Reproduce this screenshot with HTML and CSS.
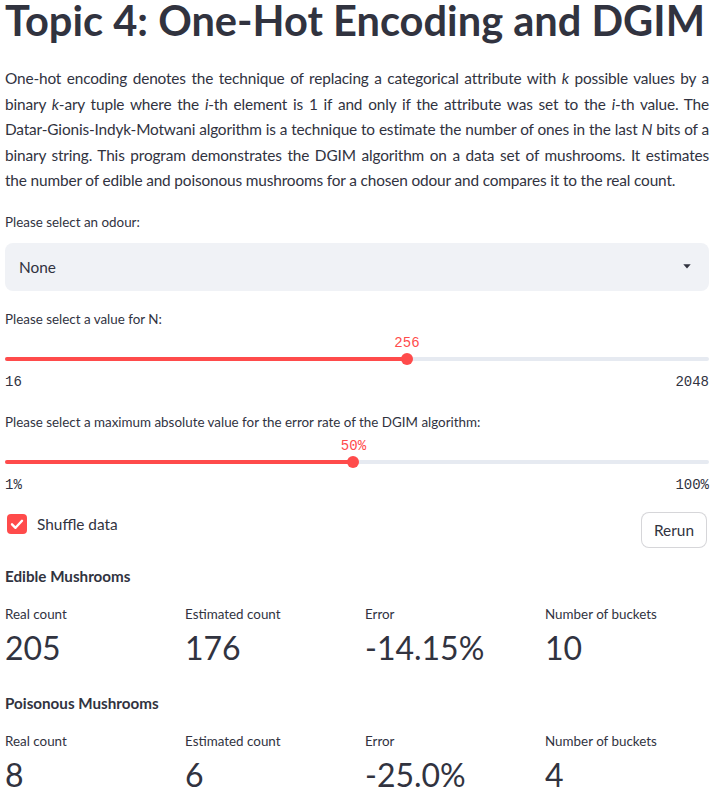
FILE: index.html
```html
<!DOCTYPE html>
<html lang="en">
<head>
<meta charset="utf-8">
<title>Topic 4: One-Hot Encoding and DGIM</title>
<link rel="stylesheet" href="styles.css">
</head>
<body>
<main class="page">
  <h1 class="title">Topic 4: One-Hot Encoding and DGIM</h1>
  <p class="intro"><span class="line">One-hot encoding denotes the technique of replacing a categorical attribute with <em>k</em> possible values by a</span> <span class="line">binary <em>k</em>-ary tuple where the <em>i</em>-th element is 1 if and only if the attribute was set to the <em>i</em>-th value. The</span> <span class="line">Datar-Gionis-Indyk-Motwani algorithm is a technique to estimate the number of ones in the last <em>N</em> bits of a</span> <span class="line">binary string. This program demonstrates the DGIM algorithm on a data set of mushrooms. It estimates</span> <span class="line last">the number of edible and poisonous mushrooms for a chosen odour and compares it to the real count.</span></p>

  <div class="field">
    <div class="label">Please select an odour:</div>
    <div class="select">
      <span class="select-value">None</span>
      <svg class="caret" width="8" height="5" viewBox="0 0 8 5"><path d="M0.3 0.3 H7.7 L4 4.6 Z" fill="#31333F"/></svg>
    </div>
  </div>

  <div class="field">
    <div class="label">Please select a value for N:</div>
    <div class="slider">
      <div class="track"><div class="fill" style="width:57.1%"></div></div>
      <div class="thumb" style="left:57.1%"><span class="thumb-value">256</span></div>
    </div>
    <div class="ticks"><span>16</span><span>2048</span></div>
  </div>

  <div class="field">
    <div class="label">Please select a maximum absolute value for the error rate of the DGIM algorithm:</div>
    <div class="slider">
      <div class="track"><div class="fill" style="width:49.5%"></div></div>
      <div class="thumb" style="left:49.5%"><span class="thumb-value">50%</span></div>
    </div>
    <div class="ticks"><span>1%</span><span>100%</span></div>
  </div>

  <div class="controls">
    <label class="checkbox">
      <span class="box"><svg width="20" height="20" viewBox="0 0 20 20"><polyline points="5,10.3 8.5,13.8 15,6.8" fill="none" stroke="#fff" stroke-width="2.4" stroke-linecap="round" stroke-linejoin="round"/></svg></span>
      <span class="checkbox-text">Shuffle data</span>
    </label>
    <button class="button" type="button">Rerun</button>
  </div>

  <section class="group">
    <div class="group-title">Edible Mushrooms</div>
    <div class="metrics">
      <div class="metric"><div class="metric-label">Real count</div><div class="metric-value">205</div></div>
      <div class="metric"><div class="metric-label">Estimated count</div><div class="metric-value">176</div></div>
      <div class="metric"><div class="metric-label">Error</div><div class="metric-value">-14.15%</div></div>
      <div class="metric"><div class="metric-label">Number of buckets</div><div class="metric-value">10</div></div>
    </div>
  </section>

  <section class="group">
    <div class="group-title">Poisonous Mushrooms</div>
    <div class="metrics">
      <div class="metric"><div class="metric-label">Real count</div><div class="metric-value">8</div></div>
      <div class="metric"><div class="metric-label">Estimated count</div><div class="metric-value">6</div></div>
      <div class="metric"><div class="metric-label">Error</div><div class="metric-value">-25.0%</div></div>
      <div class="metric"><div class="metric-label">Number of buckets</div><div class="metric-value">4</div></div>
    </div>
  </section>
</main>
</body>
</html>
```

FILE: styles.css
```css
* { box-sizing: border-box; }

html, body {
  margin: 0;
  padding: 0;
  background: #ffffff;
}

body {
  font-family: Lato, "Noto Sans", sans-serif;
  color: #31333F;
  overflow: hidden;
}

.page {
  padding: 0 5px;
}

.title {
  margin: 0;
  font-size: 41.6px;
  line-height: 40px;
  font-weight: 700;
  white-space: nowrap;
}

.intro {
  margin: 26px 0 0;
  font-size: 15.4px;
  line-height: 25.6px;
  letter-spacing: -0.15px;
  text-align: justify;
}

.intro .line {
  display: block;
  text-align: justify;
  text-align-last: justify;
}

.intro .line.last {
  text-align-last: left;
}

.intro em {
  font-style: italic;
}

.field {
  margin-top: 17px;
}

.label {
  font-size: 13.4px;
  line-height: 22px;
}

.select {
  margin-top: 10px;
  height: 48px;
  background: #F0F2F6;
  border-radius: 8px;
  display: flex;
  align-items: center;
  justify-content: space-between;
  padding: 0 18px 0 14px;
}

.select-value {
  font-size: 15.4px;
}

.caret {
  display: block;
}

.slider {
  position: relative;
  height: 40px;
}

.track {
  position: absolute;
  left: 0;
  right: 0;
  top: 27px;
  height: 4px;
  border-radius: 2px;
  background: #E6EAF1;
  overflow: hidden;
}

.fill {
  height: 100%;
  background: #FF4B4B;
}

.thumb {
  position: absolute;
  top: 23px;
  width: 12px;
  height: 12px;
  margin-left: -6px;
  border-radius: 50%;
  background: #FF4B4B;
}

.thumb-value {
  position: absolute;
  bottom: 14px;
  left: 50%;
  transform: translateX(-50%);
  font-family: "Liberation Mono", "DejaVu Sans Mono", monospace;
  font-size: 14px;
  line-height: 16px;
  color: #FF4B4B;
  white-space: nowrap;
}

.ticks {
  display: flex;
  justify-content: space-between;
  font-family: "Liberation Mono", "DejaVu Sans Mono", monospace;
  font-size: 14px;
  line-height: 24px;
}

.controls {
  margin-top: 15px;
  display: flex;
  justify-content: space-between;
  align-items: flex-start;
}

.checkbox {
  display: flex;
  align-items: center;
  gap: 10px;
  margin: 2px 0 0 2px;
}

.box {
  width: 20px;
  height: 20px;
  border-radius: 4px;
  background: #FF4B4B;
  display: block;
}

.box svg {
  display: block;
}

.checkbox-text {
  font-size: 15.4px;
  line-height: 20px;
}

.button {
  margin-right: 2px;
  height: 36px;
  padding: 0 12px;
  border: 1px solid rgba(49, 51, 63, 0.2);
  border-radius: 8px;
  background: #ffffff;
  font-family: Lato, "Noto Sans", sans-serif;
  font-size: 15.4px;
  color: #31333F;
}

.group {
  margin-top: 16px;
}

.group + .group {
  margin-top: 23px;
}

.group-title {
  font-size: 15.2px;
  font-weight: 700;
  line-height: 24px;
}

.metrics {
  margin-top: 14px;
  display: grid;
  grid-template-columns: repeat(4, 1fr);
  gap: 16px;
}

.metric-label {
  font-size: 13.4px;
  line-height: 24px;
}

.metric-value {
  margin-top: 2px;
  font-size: 32px;
  line-height: 40px;
}
```
